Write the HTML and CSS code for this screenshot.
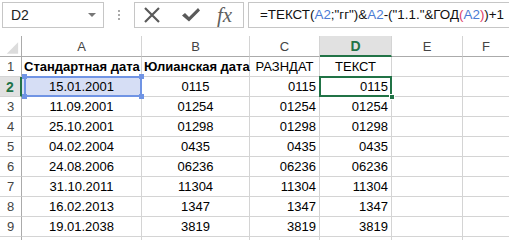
FILE: index.html
```html
<!DOCTYPE html>
<html>
<head>
<meta charset="utf-8">
<link rel="stylesheet" href="styles.css">
</head>
<body>
<div class="toolbar">
  <div class="namebox"><span>D2</span><span class="arrow"></span></div>
  <div class="dots"><i></i><i></i><i></i></div>
  <div class="btns">
    <svg class="ic-x" width="18" height="18" viewBox="0 0 18 18"><path d="M2 2L16 16M16 2L2 16" stroke="#5a5a5a" stroke-width="2.2" fill="none"/></svg>
    <svg class="ic-ok" width="20" height="18" viewBox="0 0 20 18"><path d="M1 9.5L4 7L8 11L17 2L19 4.5L8 15.5Z" fill="#5a5a5a"/></svg>
    <span class="fx">fx</span>
  </div>
  <div class="fbar">=ТЕКСТ(<span class="ref">A2</span>;"гг")&amp;<span class="ref">A2</span>-("1.1."&amp;ГОД<span class="par">(</span><span class="ref">A2</span><span class="par">)</span>)+1</div>
</div>
<div class="grid">
  <div class="corner"><svg width="22" height="21" viewBox="0 0 22 21"><path d="M7 18L19 18L19 6Z" fill="#dcdcdc"/></svg></div>
  <div class="ch">A</div><div class="ch">B</div><div class="ch">C</div><div class="ch sel">D</div><div class="ch">E</div><div class="ch last">F</div>

  <div class="rh">1</div><div class="c b l">Стандартная дата</div><div class="c b l">Юлианская дата</div><div class="c m">РАЗНДАТ</div><div class="c m">ТЕКСТ</div><div class="c"></div><div class="c last"></div>

  <div class="rh sel">2</div><div class="c m hl">15.01.2001</div><div class="c m">0115</div><div class="c r">0115</div><div class="c r act">0115</div><div class="c"></div><div class="c last"></div>

  <div class="rh">3</div><div class="c m">11.09.2001</div><div class="c m">01254</div><div class="c r">01254</div><div class="c r">01254</div><div class="c"></div><div class="c last"></div>

  <div class="rh">4</div><div class="c m">25.10.2001</div><div class="c m">01298</div><div class="c r">01298</div><div class="c r">01298</div><div class="c"></div><div class="c last"></div>

  <div class="rh">5</div><div class="c m">04.02.2004</div><div class="c m">0435</div><div class="c r">0435</div><div class="c r">0435</div><div class="c"></div><div class="c last"></div>

  <div class="rh">6</div><div class="c m">24.08.2006</div><div class="c m">06236</div><div class="c r">06236</div><div class="c r">06236</div><div class="c"></div><div class="c last"></div>

  <div class="rh">7</div><div class="c m">31.10.2011</div><div class="c m">11304</div><div class="c r">11304</div><div class="c r">11304</div><div class="c"></div><div class="c last"></div>

  <div class="rh">8</div><div class="c m">16.02.2013</div><div class="c m">1347</div><div class="c r">1347</div><div class="c r">1347</div><div class="c"></div><div class="c last"></div>

  <div class="rh">9</div><div class="c m">19.01.2038</div><div class="c m">3819</div><div class="c r">3819</div><div class="c r">3819</div><div class="c"></div><div class="c last"></div>

  <div class="rh tail"></div><div class="c tail"></div><div class="c tail"></div><div class="c tail"></div><div class="c tail"></div><div class="c tail"></div><div class="c tail last"></div>
</div>
</body>
</html>
```
FILE: styles.css
```css
html, body {
  margin: 0;
  padding: 0;
  background: #ffffff;
  width: 509px;
  height: 240px;
  overflow: hidden;
  font-family: "Liberation Sans", Arial, sans-serif;
  color: #000;
}
.toolbar {
  display: flex;
  align-items: flex-start;
  height: 27px;
  padding-top: 2px;
  margin-bottom: 7px;
  white-space: nowrap;
}
.namebox {
  box-sizing: border-box;
  margin-left: 2px;
  width: 102px;
  height: 26px;
  border: 1px solid #c6c6c6;
  display: flex;
  align-items: center;
  justify-content: space-between;
  padding: 0 7px 0 8px;
  font-size: 14px;
  color: #222;
}
.arrow {
  width: 0;
  height: 0;
  border-left: 4px solid transparent;
  border-right: 4px solid transparent;
  border-top: 4px solid #777;
}
.dots {
  width: 30px;
  height: 26px;
  display: flex;
  flex-direction: column;
  align-items: center;
  justify-content: center;
  gap: 2px;
}
.dots i {
  display: block;
  width: 2px;
  height: 2px;
  background: #aaa;
}
.btns {
  box-sizing: border-box;
  width: 110px;
  height: 26px;
  border: 1px solid #c6c6c6;
  display: flex;
  align-items: center;
  padding-left: 8px;
}
.ic-x { margin-right: 20px; }
.ic-ok { margin-right: 16px; }
.fx {
  font-family: "Liberation Serif", "Times New Roman", serif;
  font-style: italic;
  font-size: 21px;
  color: #5f5f5f;
  line-height: 20px;
}
.fbar {
  box-sizing: border-box;
  margin-left: 4px;
  flex: 1;
  height: 26px;
  border: 1px solid #c6c6c6;
  border-right: none;
  padding-left: 11px;
  font-size: 13.4px;
  line-height: 24px;
  color: #111;
}
.ref { color: #4a7bd4; }
.par { color: #e0406a; }

.grid {
  display: grid;
  grid-template-columns: 22px 120px 108px 70px 72px 71px 46px;
  grid-template-rows: 21px repeat(9, 20px) 3px;
  font-size: 13px;
}
.grid > div {
  box-sizing: border-box;
  border-right: 1px solid #d4d4d4;
  border-bottom: 1px solid #d4d4d4;
  white-space: nowrap;
  display: flex;
  align-items: center;
}
.grid > .tail { border-bottom: none; }
.grid > .last { border-right: none; }
.corner {
  border-bottom: 1px solid #ababab !important;
  border-right: 1px solid #ababab !important;
}
.ch {
  justify-content: center;
  color: #444;
  border-bottom: 1px solid #ababab !important;
}
.ch.sel {
  background: #e1e1e1;
  color: #217346;
  font-weight: bold;
  border-bottom: 2px solid #217346 !important;
  font-size: 14px;
}
.rh {
  justify-content: center;
  color: #444;
  border-right: 1px solid #ababab !important;
  border-bottom: 1px solid #d4d4d4;
}
.rh.sel {
  background: #e1e1e1;
  color: #217346;
  font-weight: bold;
  border-right: 2px solid #217346 !important;
  font-size: 14px;
}
.c { padding: 0 3px; overflow: visible; }
.b { font-weight: bold; }
.l { justify-content: flex-start; padding-left: 2px; }
.m { justify-content: center; }
.r { justify-content: flex-end; }
.hl {
  position: relative;
  background: #d6def5;
}
.hl::before {
  content: "";
  position: absolute;
  left: 2px; top: -1px; right: -1px; bottom: -1px;
  border: 2px solid #7094e4;
}
.hl::after {
  content: "";
  position: absolute;
  left: 0; top: -3px; right: -3px; bottom: -3px;
  background:
    linear-gradient(#7094e4, #7094e4) left top / 5px 5px no-repeat,
    linear-gradient(#7094e4, #7094e4) right top / 5px 5px no-repeat,
    linear-gradient(#7094e4, #7094e4) left bottom / 5px 5px no-repeat,
    linear-gradient(#7094e4, #7094e4) right bottom / 5px 5px no-repeat;
}
.act { position: relative; }
.act::before {
  content: "";
  position: absolute;
  left: -1px; top: -1px; right: -1px; bottom: -1px;
  border: 2px solid #217346;
}
.act::after {
  content: "";
  position: absolute;
  width: 6px; height: 6px;
  right: -4px; bottom: -4px;
  background: #217346;
  border: 1px solid #fff;
  box-sizing: border-box;
}
```
